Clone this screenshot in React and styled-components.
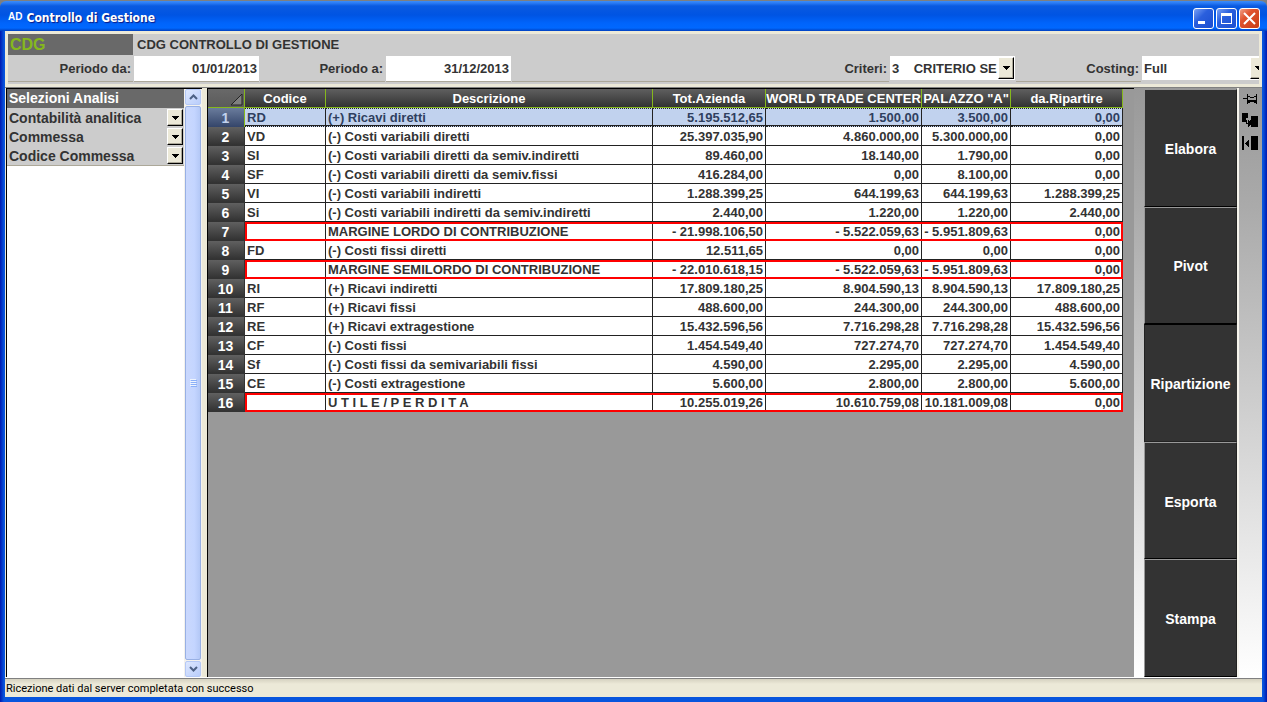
import React, { useState } from "react";
import styled, { createGlobalStyle, css } from "styled-components";

const GlobalStyle = createGlobalStyle`
  * {
    box-sizing: border-box;
  }
  body {
    margin: 0;
    background-color: #7f7f7f;
    font-family: "Liberation Sans", Arial, sans-serif;
    font-size: 13px;
    font-weight: bold;
    color: #333;
  }
  button, input, select {
    font: inherit;
    color: inherit;
    border: none;
    border-radius: 0;
    padding: 0;
    margin: 0;
  }
`;

const Window = styled.div`
  display: flex;
  flex-direction: column;
  min-height: 100vh;
  padding-top: 1px;
`;

const TitleBar = styled.header`
  display: flex;
  align-items: center;
  gap: 4px;
  height: 30px;
  padding: 4px 7px 0 8px;
  color: white;
  border-radius: 6px 6px 0 0;
  background: linear-gradient(
    #3c8cf8 0,
    #2a7bf5 2px,
    #0a5ae0 5px,
    #0054e3 14px,
    #0064fb 22px,
    #0068ff 27px,
    #0040c0 30px
  );
`;

const AppMark = styled.span`
  font-size: 10px;
  line-height: 14px;
  padding-bottom: 2px;
`;

const WindowTitle = styled.h1`
  flex: 1;
  margin: 0;
  font-family: "DejaVu Sans Condensed", "DejaVu Sans", sans-serif;
  font-size: 12px;
  text-shadow: 1px 1px 1px #0a1883;
`;

const WindowButtons = styled.div`
  display: flex;
  gap: 2px;
`;

const WindowButton = styled.button`
  width: 21px;
  height: 21px;
  border: 1px solid white;
  border-radius: 3px;
  background: ${(props) =>
    props.$close
      ? "linear-gradient(135deg, #f0a088, #e0532e 35%, #c83c14)"
      : "linear-gradient(135deg, #7aa2f5, #2a5fdd 40%, #1c4fd0)"};
  svg {
    display: block;
  }
`;

const Frame = styled.main`
  flex: 1;
  display: flex;
  flex-direction: column;
  border: solid #0831d9;
  border-width: 0 5px 5px;
  border-image: linear-gradient(to right, #0019b0, #0855dd 4px, #0855dd calc(100% - 4px), #0019b0) 0 5 5;
  background-color: #ece9d8;
`;

const Header = styled.div`
  margin: 3px 3px 3px;
  padding-bottom: 3px;
  background-color: #ccc;
  overflow: hidden;
`;

const HeaderTop = styled.div`
  display: grid;
  grid-template-columns: 125px 1fr;
  gap: 4px;
  height: 22px;
  line-height: 22px;
`;

const Code = styled.span`
  height: 21px;
  line-height: 21px;
  padding-left: 2px;
  font-size: 16px;
  color: #85b81c;
  background-color: #696969;
`;

const Fields = styled.div`
  display: grid;
  grid-template-columns: repeat(9, 126px) 1fr;
  height: 25px;
`;

const FieldLabel = styled.label`
  grid-column: span ${(props) => props.$span || 1};
  margin-right: 1px;
  padding-right: 2px;
  line-height: 25px;
  text-align: right;
  border-bottom: 1px solid #aca899;
`;

const DateInput = styled.input`
  min-width: 0;
  margin-right: 1px;
  padding-right: 2px;
  text-align: right;
  background-color: white;
  border-bottom: 1px solid #aca899;
`;

const Combo = styled.div`
  position: relative;
  width: ${(props) => props.$width || "100%"};
  height: ${(props) => props.$height}px;
`;

const ComboSelect = styled.select`
  appearance: none;
  display: block;
  width: 100%;
  height: 100%;
  padding: 0 16px 0 2px;
  font-size: ${(props) => props.$size || 13}px;
  background-color: ${(props) => props.$bg || "white"};
`;

const ComboArrow = styled.span`
  position: absolute;
  top: 1px;
  right: 1px;
  bottom: 1px;
  width: 16px;
  display: flex;
  align-items: center;
  justify-content: center;
  background-color: #ece9d8;
  border: solid;
  border-width: 1px;
  border-color: white #000 #000 white;
  box-shadow: inset -1px -1px #aca899;
  pointer-events: none;
`;

const Body = styled.div`
  flex: 1;
  display: flex;
  border-top: 1px solid #808080;
  border-bottom: 1px solid white;
`;

const Side = styled.aside`
  display: flex;
  width: 196px;
  margin-left: 1px;
  margin-right: 5px;
  border-left: 1px solid black;
  border-top: 1px solid black;
  background-color: white;
`;

const SideList = styled.div`
  flex: 1;
`;

const SideTitle = styled.h2`
  height: 19px;
  margin: 0;
  padding-left: 2px;
  font-size: 14px;
  line-height: 19px;
  color: white;
  background-color: #696969;
`;

const SideFilters = styled.div`
  background-color: #ccc;
  border-bottom: 1px solid #aca899;
`;

const ScrollBar = styled.div`
  display: flex;
  flex-direction: column;
  width: 18px;
  padding: 0 1px;
  background-color: #f3f1ec;
`;

const ScrollButton = styled.button`
  display: flex;
  align-items: center;
  justify-content: center;
  height: 16px;
  border: 1px solid #b4c8f6;
  border-radius: 2px;
  background: linear-gradient(135deg, #dde7fe, #b9cdfb);
`;

const ScrollThumb = styled.div`
  flex: 1;
  display: flex;
  align-items: center;
  justify-content: center;
  margin: 1px 0;
  border: 1px solid #98b0e4;
  border-radius: 2px;
  background: linear-gradient(to right, #cad8fd, #c4d5ff 60%, #b4c8f6);
`;

const GridArea = styled.section`
  flex: 1;
  min-width: 0;
  overflow: hidden;
  background-color: #999;
  border-left: 1px solid black;
  border-top: 1px solid black;
`;

const Table = styled.table`
  table-layout: fixed;
  width: 915px;
  border-spacing: 0;
  background-color: white;
  td, th {
    height: 19px;
    line-height: 18px;
    white-space: nowrap;
    overflow: hidden;
  }
`;

const Col = styled.col`
  width: ${(props) => props.$width}px;
`;

const HeadCell = styled.th`
  padding: 0 1px 0 0;
  color: white;
  background: linear-gradient(#5f5f5f, #303030);
  box-shadow: inset -1px -1px #85b81c;
`;

const Corner = styled.th`
  padding: 0 2px;
  text-align: right;
  background: linear-gradient(#696969, #5a5a5a);
  box-shadow: inset -1px 0 #85b81c, inset 0 -1px #85b81c;
  svg {
    display: inline-block;
    vertical-align: middle;
  }
`;

const RowNumber = styled.th`
  padding: 0 2px 0 0;
  font-size: 14px;
  color: ${(props) => (props.$selected ? "#c1d2ee" : "white")};
  background: ${(props) =>
    props.$selected
      ? "linear-gradient(#6a7c9c, #34456a)"
      : "linear-gradient(#606060, #303030)"};
  box-shadow: inset ${(props) => (props.$selected ? "-1px 0 #85b81c" : "-1px -1px #333")};
`;

const totalEdges = "inset 0 2px red, inset 0 -2px red";

const Cell = styled.td`
  padding: 0 3px 0 2px;
  text-align: ${(props) => (props.$right ? "right" : "left")};
  box-shadow: inset -1px -1px #222;
`;

const Row = styled.tr`
  ${(props) =>
    props.$selected &&
    css`
      color: #2f3f5f;
      background-color: #c1d2ee;
      ${Cell} {
        border-top: 1px dotted #222;
        border-bottom: 1px dotted #222;
        line-height: 17px;
      }
    `}
  ${(props) =>
    props.$total &&
    css`
      ${Cell} {
        box-shadow: ${totalEdges}, inset -1px 0 #222;
      }
      ${Cell}:nth-child(2) {
        box-shadow: ${totalEdges}, inset 2px 0 red, inset -1px 0 #222;
      }
      ${Cell}:last-child {
        box-shadow: ${totalEdges}, inset -2px 0 red;
      }
    `}
`;

const Actions = styled.nav`
  display: flex;
  flex-direction: column;
  width: 103px;
  padding: 1px 0 0 10px;
  background: linear-gradient(#999, #aaa 20%, #fff);
`;

const ActionButton = styled.button`
  flex: 1;
  padding-top: 2px;
  font-size: 14px;
  color: white;
  background-color: #333;
  border: solid;
  border-width: 1px;
  border-color: ${(props) => (props.$pressed ? "#000 #333 #222 #222" : "#999 #222 #000 #999")};
`;

const Tools = styled.div`
  display: flex;
  flex-direction: column;
  gap: 6px;
  width: 25px;
  padding: 3px 0 0 3px;
  border-left: 2px solid #f6f4ec;
  background: linear-gradient(#999, #aaa 20%, #fff);
`;

const ToolButton = styled.button`
  width: 16px;
  height: 16px;
  background: none;
  svg {
    display: block;
  }
`;

const StatusBar = styled.footer`
  height: 19px;
  padding-left: 1px;
  font-family: Roboto, sans-serif;
  font-size: 11px;
  font-weight: normal;
  line-height: 19px;
  color: black;
  border-top: 1px solid #808080;
  background: linear-gradient(#d5d1c0, #ece9d8 5px);
`;

const columns = [
  { label: "Codice", width: 81 },
  { label: "Descrizione", width: 327 },
  { label: "Tot.Azienda", width: 113 },
  { label: "WORLD TRADE CENTER", width: 156 },
  { label: 'PALAZZO "A"', width: 89 },
  { label: "da.Ripartire", width: 112 },
];

const rows = [
  ["RD", "(+) Ricavi diretti", "5.195.512,65", "1.500,00", "3.500,00", "0,00"],
  ["VD", "(-) Costi variabili diretti", "25.397.035,90", "4.860.000,00", "5.300.000,00", "0,00"],
  ["SI", "(-) Costi variabili diretti da semiv.indiretti", "89.460,00", "18.140,00", "1.790,00", "0,00"],
  ["SF", "(-) Costi variabili diretti da semiv.fissi", "416.284,00", "0,00", "8.100,00", "0,00"],
  ["VI", "(-) Costi variabili indiretti", "1.288.399,25", "644.199,63", "644.199,63", "1.288.399,25"],
  ["Si", "(-) Costi variabili indiretti da semiv.indiretti", "2.440,00", "1.220,00", "1.220,00", "2.440,00"],
  ["", "MARGINE LORDO DI CONTRIBUZIONE", "- 21.998.106,50", "- 5.522.059,63", "- 5.951.809,63", "0,00"],
  ["FD", "(-) Costi fissi diretti", "12.511,65", "0,00", "0,00", "0,00"],
  ["", "MARGINE SEMILORDO DI CONTRIBUZIONE", "- 22.010.618,15", "- 5.522.059,63", "- 5.951.809,63", "0,00"],
  ["RI", "(+) Ricavi indiretti", "17.809.180,25", "8.904.590,13", "8.904.590,13", "17.809.180,25"],
  ["RF", "(+) Ricavi fissi", "488.600,00", "244.300,00", "244.300,00", "488.600,00"],
  ["RE", "(+) Ricavi extragestione", "15.432.596,56", "7.716.298,28", "7.716.298,28", "15.432.596,56"],
  ["CF", "(-) Costi fissi", "1.454.549,40", "727.274,70", "727.274,70", "1.454.549,40"],
  ["Sf", "(-) Costi fissi da semivariabili fissi", "4.590,00", "2.295,00", "2.295,00", "4.590,00"],
  ["CE", "(-) Costi extragestione", "5.600,00", "2.800,00", "2.800,00", "5.600,00"],
  ["", "U T I L E / P E R D I T A", "10.255.019,26", "10.610.759,08", "10.181.009,08", "0,00"],
];

const filters = ["Contabilità analitica", "Commessa", "Codice Commessa"];
const actions = ["Elabora", "Pivot", "Ripartizione", "Esporta", "Stampa"];

const Dropdown = ({ id, label, options, width, height, size, bg }) => (
  <Combo $width={width} $height={height}>
    <ComboSelect id={id} aria-label={label} $size={size} $bg={bg}>
      {options.map((option) => (
        <option key={option}>{option}</option>
      ))}
    </ComboSelect>
    <ComboArrow>
      <svg width="7" height="4" viewBox="0 0 7 4" shapeRendering="crispEdges">
        <path d="M0 0h7v1H6v1H5v1H4v1H3V3H2V2H1V1H0z" />
      </svg>
    </ComboArrow>
  </Combo>
);

const Chevron = ({ up }) => (
  <svg width="9" height="6" viewBox="0 0 9 6">
    <path
      d={up ? "M1 5l3.5-3.5L8 5" : "M1 1l3.5 3.5L8 1"}
      fill="none"
      stroke="#4d6185"
      strokeWidth="2"
    />
  </svg>
);

const App = () => {
  const [selected, setSelected] = useState(0);
  const [from, setFrom] = useState("01/01/2013");
  const [to, setTo] = useState("31/12/2013");

  return (
    <>
      <GlobalStyle />
      <Window>
        <TitleBar>
          <AppMark>AD</AppMark>
          <WindowTitle>Controllo di Gestione</WindowTitle>
          <WindowButtons>
            <WindowButton aria-label="Riduci a icona">
              <svg width="19" height="19" viewBox="0 0 19 19">
                <path d="M4 12h7v3H4z" fill="white" />
              </svg>
            </WindowButton>
            <WindowButton aria-label="Ingrandisci">
              <svg width="19" height="19" viewBox="0 0 19 19">
                <path d="M4 4h11v11H4zM5 7v7h9V7z" fill="white" fillRule="evenodd" />
              </svg>
            </WindowButton>
            <WindowButton $close aria-label="Chiudi">
              <svg width="19" height="19" viewBox="0 0 19 19">
                <path d="M4 4l11 11M15 4L4 15" stroke="white" strokeWidth="2" />
              </svg>
            </WindowButton>
          </WindowButtons>
        </TitleBar>

        <Frame>
          <Header>
            <HeaderTop>
              <Code>CDG</Code>
              <span>CDG CONTROLLO DI GESTIONE</span>
            </HeaderTop>
            <Fields>
              <FieldLabel htmlFor="from">Periodo da:</FieldLabel>
              <DateInput id="from" value={from} onChange={(e) => setFrom(e.target.value)} />
              <FieldLabel htmlFor="to">Periodo a:</FieldLabel>
              <DateInput id="to" value={to} onChange={(e) => setTo(e.target.value)} />
              <FieldLabel htmlFor="criteria" $span={3}>Criteri:</FieldLabel>
              <Dropdown
                id="criteria"
                width="125px"
                height={24}
                options={["3\u00a0\u00a0\u00a0\u00a0CRITERIO SE"]}
              />
              <FieldLabel htmlFor="costing">Costing:</FieldLabel>
              <Dropdown id="costing" width="125px" height={24} options={["Full"]} />
            </Fields>
          </Header>

          <Body>
            <Side>
              <SideList>
                <SideTitle>Selezioni Analisi</SideTitle>
                <SideFilters>
                  {filters.map((filter) => (
                    <Dropdown
                      key={filter}
                      label={filter}
                      height={19}
                      size={14}
                      bg="#ccc"
                      options={[filter]}
                    />
                  ))}
                </SideFilters>
              </SideList>
              <ScrollBar>
                <ScrollButton aria-label="Scorri su">
                  <Chevron up />
                </ScrollButton>
                <ScrollThumb>
                  <svg width="7" height="8" viewBox="0 0 7 8">
                    <path d="M0 0h6v1H0zM0 2h6v1H0zM0 4h6v1H0zM0 6h6v1H0z" fill="#eef4fe" />
                    <path d="M1 1h6v1H1zM1 3h6v1H1zM1 5h6v1H1zM1 7h6v1H1z" fill="#8cb0f8" />
                  </svg>
                </ScrollThumb>
                <ScrollButton aria-label="Scorri giù">
                  <Chevron />
                </ScrollButton>
              </ScrollBar>
            </Side>

            <GridArea>
              <Table>
                <colgroup>
                  <Col $width={37} />
                  {columns.map((column) => (
                    <Col key={column.label} $width={column.width} />
                  ))}
                </colgroup>
                <thead>
                  <tr>
                    <Corner>
                      <svg width="13" height="13" viewBox="0 0 13 13">
                        <path d="M12 1v11H1z" fill="#808080" stroke="#222" />
                      </svg>
                    </Corner>
                    {columns.map((column) => (
                      <HeadCell key={column.label}>{column.label}</HeadCell>
                    ))}
                  </tr>
                </thead>
                <tbody>
                  {rows.map((row, i) => (
                    <Row
                      key={i}
                      $selected={selected === i}
                      $total={row[0] === ""}
                      onClick={() => setSelected(i)}
                    >
                      <RowNumber $selected={selected === i}>{i + 1}</RowNumber>
                      {row.map((value, j) => (
                        <Cell key={j} $right={j > 1}>{value}</Cell>
                      ))}
                    </Row>
                  ))}
                </tbody>
              </Table>
            </GridArea>

            <Actions>
              {actions.map((action) => (
                <ActionButton key={action} $pressed={action === "Ripartizione"}>
                  {action}
                </ActionButton>
              ))}
            </Actions>

            <Tools>
              <ToolButton aria-label="Blocca">
                <svg width="16" height="16" viewBox="0 0 16 16" shapeRendering="crispEdges">
                  <path d="M1 7h5v1H1zM5 3h1v10H5zM6 5h2v1H6zM8 6h4v1H8zM12 5h2v1h-2zM14 3h1v10h-1zM6 9h8v2H6zM6 11h2v1H6zM12 11h2v1h-2z" />
                </svg>
              </ToolButton>
              <ToolButton aria-label="Sposta">
                <svg width="16" height="16" viewBox="0 0 16 16" shapeRendering="crispEdges">
                  <path d="M0 0h6v5H4v4H0zM9 3h7v11H9v-2H8v-2h1V9H8V7h1zM4 7h1v4H4zM4 10h2v1H4zM6 7h1v7H6zM7 8h1v5H7zM8 9h1v3H8z" />
                </svg>
              </ToolButton>
              <ToolButton aria-label="Comprimi">
                <svg width="16" height="16" viewBox="0 0 16 16" shapeRendering="crispEdges">
                  <path d="M0 1h2v14H0zM9 1h7v14H9zM7 5v7H6v-1H5v-1H4V9H3V8h1V7h1V6h1V5z" />
                </svg>
              </ToolButton>
            </Tools>
          </Body>
          <StatusBar>Ricezione dati dal server completata con successo</StatusBar>
        </Frame>
      </Window>
    </>
  );
};

export default App;
